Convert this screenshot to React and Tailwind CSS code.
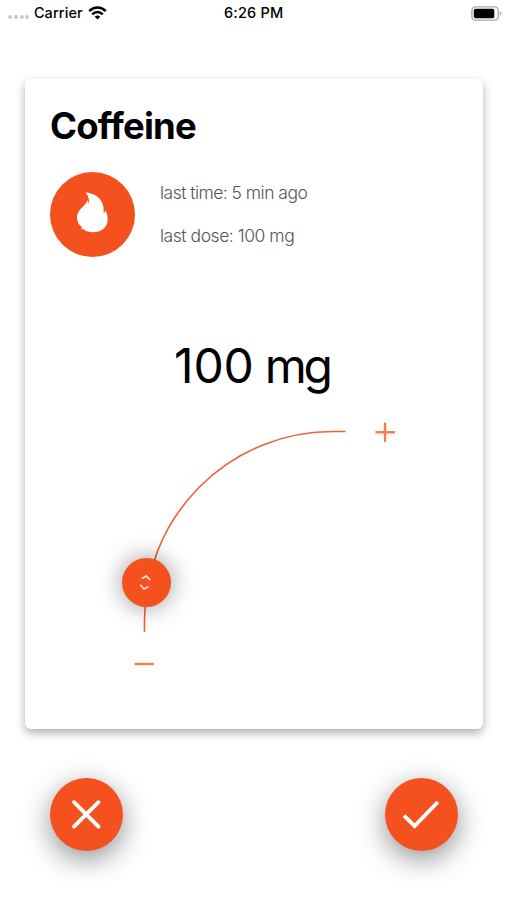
function StatusBar() {
  return (
    <header className="relative flex h-[26px] items-center justify-between pl-2 pr-[5px] text-[14.5px] font-medium">
      <div className="flex items-center">
        <div className="mr-[4.5px] mt-[8px] flex gap-[1.8px]">
          {[0, 1, 2, 3].map((dot) => (
            <span key={dot} className="size-[4px] rounded-full bg-[#c9c9c9]" />
          ))}
        </div>
        <span className="w-[49px] whitespace-nowrap tracking-[0.1px]">Carrier</span>
        <svg className="ml-[5px]" width="19" height="14" viewBox="0 0 19 14" fill="none" stroke="#000" strokeWidth="2.5">
          <path d="M1.2 5.2C6 .4 13 .4 17.8 5.2" />
          <path d="M4.2 8.4C7.4 5.3 11.6 5.3 14.8 8.4" />
          <path d="M9.5 13.6 6.7 10.8Q9.5 8.4 12.3 10.8Z" fill="#000" stroke="none" />
        </svg>
      </div>
      <span className="absolute left-[224px] whitespace-nowrap tracking-[0.2px]">6:26 PM</span>
      <svg width="31" height="15" viewBox="0 0 31 15">
        <rect x="0.9" y="0.9" width="26.4" height="13.2" rx="3.6" fill="none" stroke="#a9a9a9" strokeWidth="1.4" />
        <rect x="2.8" y="2.8" width="20.5" height="9.4" rx="1.8" />
        <path d="M28.8 5.2Q30.4 6 30.4 7.5T28.8 9.8Z" fill="#a9a9a9" />
      </svg>
    </header>
  )
}

function Flame() {
  return (
    <svg width="85" height="85" viewBox="0 0 85 85" fill="#fff">
      <path d="M35.5 20.3C45.5 21.5 52.6 27 53.5 35.5C53.8 38 53.6 40 53.6 41.3C54.6 40.6 55.2 39.6 55.4 38.3C57.2 41.3 57.9 45 57.6 48.5C57 56 51 60.2 43 60.2C38.8 60.2 35.4 59 33.6 57.2C32.8 57.5 31.9 57.1 31.3 56.5L31.8 55C28.6 52.6 26.9 49.3 27 45.3C27.1 41 29.3 38 32.3 35.2C34.9 32.8 36.9 31 37.2 28.3C38 29.6 38.4 30.8 38.5 32C39.7 28 38.6 24 35.5 20.3Z" />
    </svg>
  )
}

function DoseDial() {
  return (
    <div className="relative h-[260px]">
      <svg width="457" height="260" viewBox="0 0 457 260" fill="none">
        <path d="M320.5 21.5H308A188.5 188.5 0 0 0 119.5 210V222" stroke="#ec6236" strokeWidth="1.6" />
        <path d="M350.5 22.2H370M360 12.5V32" stroke="#f3804e" strokeWidth="2.4" />
        <path d="M109.5 254H129" stroke="#f3804e" strokeWidth="2.4" />
      </svg>
      <div className="absolute left-[97px] top-[148px] size-[49px] rounded-full bg-[#f4511e] shadow-[0_0_24px_rgba(0,0,0,0.42)]">
        <svg width="49" height="49" viewBox="0 0 49 49" fill="none" stroke="#fde3d9" strokeWidth="1.7">
          <path d="M19.8 20.4 24.3 18 28.2 22.2" />
          <path d="M18.2 26.8 22 31 26.6 28.6" />
        </svg>
      </div>
    </div>
  )
}

function RoundButton({ label, children }) {
  return (
    <button
      aria-label={label}
      className="size-[73px] rounded-full bg-[#f4511e] shadow-[0_8px_28px_rgba(0,0,0,0.44)]"
    >
      <svg width="73" height="73" viewBox="0 0 73 73" fill="none" stroke="#fff" strokeWidth="3.9">
        {children}
      </svg>
    </button>
  )
}

export default function App() {
  return (
    <div className="h-[900px] w-[507px] overflow-hidden bg-white font-['Inter',sans-serif] text-black">
      <StatusBar />

      <main className="ml-[25px] mt-[53px] h-[650px] w-[457.5px] rounded-[6px] bg-white shadow-[0_4px_10px_rgba(0,0,0,0.32)]">
        <h1 className="pl-[25px] pt-[25px] text-[36.5px] font-bold leading-[44px] tracking-[-0.8px]">Coffeine</h1>
        <div className="mt-6 flex pl-[25px]">
          <div className="size-[85px] rounded-full bg-[#f4511e]">
            <Flame />
          </div>
          <div className="ml-[25px] -mt-px text-[17.5px] font-light leading-[43px] tracking-[-0.53px] text-[#555]">
            <p>last time: 5 min ago</p>
            <p className="tracking-[-0.46px]">last dose: 100 mg</p>
          </div>
        </div>
        <p className="mt-[79px] pl-[149px] text-[48px] leading-[60px]">
          <span className="tracking-[-0.1px] [word-spacing:-2.5px]">100 </span>
          <span className="tracking-[-3.2px]">mg</span>
        </p>
        <div className="mt-[14px]">
          <DoseDial />
        </div>
      </main>

      <footer className="mt-[49px] flex justify-between pl-[50px] pr-[49px]">
        <RoundButton label="Cancel">
          <path d="M24 24.2 48.5 48.6M48.5 24.2 24 48.6" strokeLinecap="round" />
        </RoundButton>
        <RoundButton label="Confirm">
          <path d="M19 37.6 29.6 48 52.8 24" />
        </RoundButton>
      </footer>
    </div>
  )
}
